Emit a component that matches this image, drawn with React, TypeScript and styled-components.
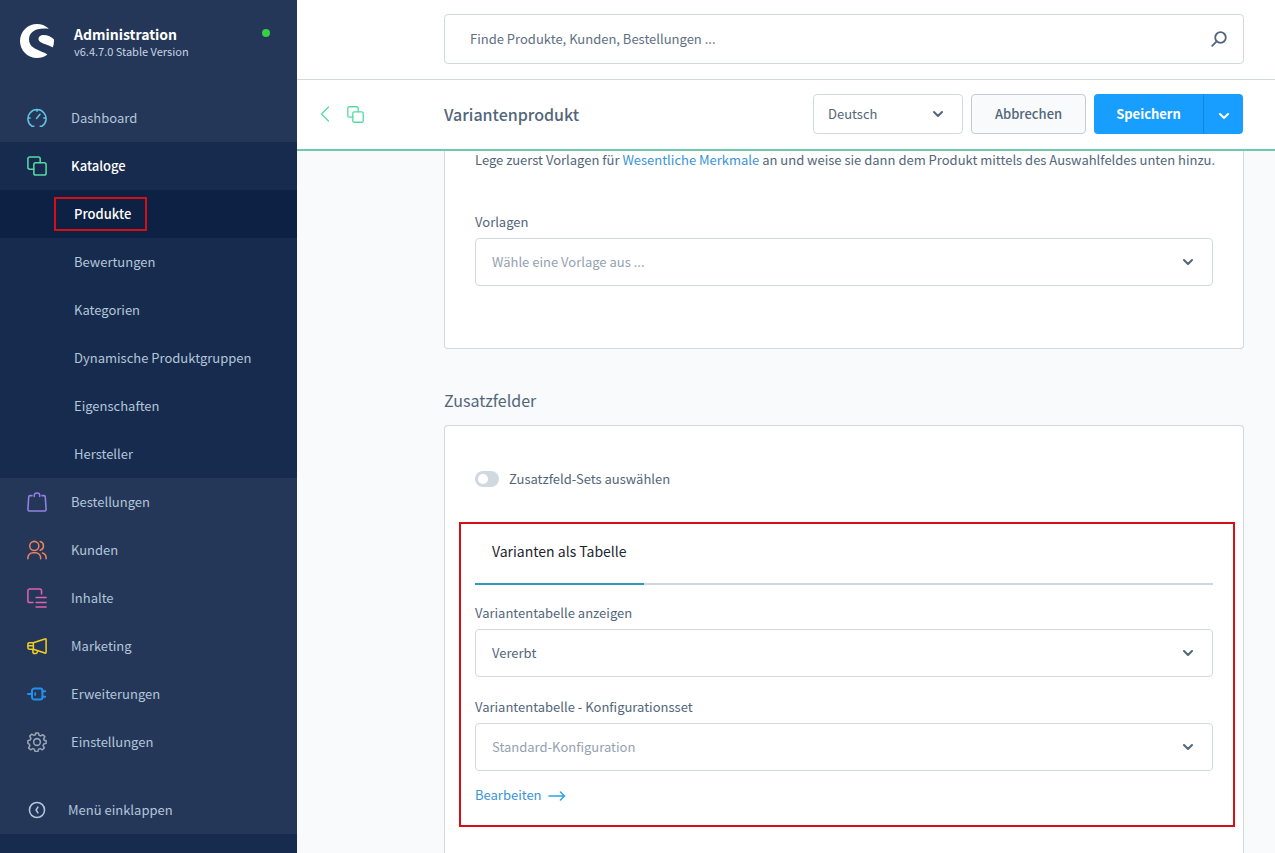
import React from 'react';
import styled, { createGlobalStyle, css } from 'styled-components';
import { SiShopware } from 'react-icons/si';

const GlobalStyle = createGlobalStyle`
  *, *::before, *::after { box-sizing: border-box; }
  body {
    margin: 0;
    background: #f9fafb;
    color: #52667a;
    font: 400 13px/20px "Noto Sans CJK SC", "Noto Sans", sans-serif;
  }
  button, input, select { font: inherit; color: inherit; }
  a { color: #3a94d8; text-decoration: none; }
`;

const Shell = styled.div`
  display: flex;
  min-height: 100vh;
`;

const Sidebar = styled.aside`
  display: flex;
  flex: 0 0 297px;
  flex-direction: column;
  background: #243758;
  color: #b3c6da;
`;

const Brand = styled.header`
  display: flex;
  align-items: flex-start;
  height: 94px;
  padding: 24px 27px 0 20px;
`;

const BrandText = styled.div`
  flex: 1;
  padding-left: 20px;
`;

const BrandName = styled.h1`
  margin: 0;
  color: #fff;
  font-size: 14px;
  font-weight: 700;
  line-height: 20px;
`;

const BrandVersion = styled.p`
  margin: 0;
  color: #c9d3e2;
  font-size: 11px;
  line-height: 14px;
`;

const StatusDot = styled.span`
  width: 8px;
  height: 8px;
  margin-top: 5px;
  border-radius: 50%;
  background: #37d046;
`;

const Nav = styled.nav`
  flex: 1;
  padding-bottom: 20px;
`;

const NavList = styled.ul`
  margin: 0;
  padding: 0;
  list-style: none;
`;

const SubList = styled(NavList)`
  background: #172b4e;
`;

const NavLink = styled.a<{ $active?: boolean }>`
  display: flex;
  align-items: center;
  gap: 24px;
  height: 48px;
  padding-left: 27px;
  color: ${(p) => (p.$active ? '#fff' : '#b3c6da')};
  background: ${(p) => (p.$active ? '#172b4e' : 'transparent')};
  font-weight: ${(p) => (p.$active ? 500 : 400)};
`;

const SubLink = styled.a<{ $active?: boolean }>`
  display: flex;
  align-items: center;
  height: 48px;
  padding-left: ${(p) => (p.$active ? 54 : 74)}px;
  color: ${(p) => (p.$active ? '#fff' : '#b3c6da')};
  background: ${(p) => (p.$active ? '#0d2144' : 'transparent')};
  font-weight: ${(p) => (p.$active ? 500 : 400)};
`;

const Marked = styled.span`
  padding: 5px 14px 5px 18px;
  border: 2px solid #d60f14;
`;

const CollapseButton = styled.button`
  display: flex;
  align-items: center;
  gap: 21px;
  height: 48px;
  padding: 0 0 0 27px;
  border: 0;
  background: none;
  cursor: pointer;
`;

const UserBar = styled.footer`
  height: 19px;
  background: #172b4e;
`;

const Main = styled.main`
  display: flex;
  flex: 1;
  flex-direction: column;
  min-width: 0;
`;

const TopBar = styled.div`
  height: 80px;
  padding: 14px 31px 0 147px;
  border-bottom: 1px solid #d1d9e0;
  background: #fff;
`;

const SearchBox = styled.label`
  display: flex;
  align-items: center;
  height: 50px;
  padding: 0 16px 0 24px;
  border: 1px solid #d1d9e0;
  border-radius: 4px;
`;

const SearchInput = styled.input`
  flex: 1;
  min-width: 0;
  padding: 0 1px;
  border: 0;
  outline: 0;
  background: none;
  &::placeholder { color: #607082; opacity: 1; }
`;

const SmartBar = styled.header`
  display: flex;
  align-items: center;
  gap: 8px;
  height: 71px;
  padding: 0 32px 1px 0;
  border-bottom: 2px solid #6fc9a8;
  background: #fff;
`;

const SmartBarIcons = styled.div`
  display: flex;
  align-items: center;
  gap: 17px;
  flex: 0 0 139px;
  padding-left: 23px;
`;

const IconLink = styled.a`
  display: flex;
`;

const Title = styled.h2`
  flex: 1;
  margin: 0;
  font-size: 16px;
  font-weight: 500;
  line-height: 24px;
`;

const buttonBase = css`
  height: 40px;
  font-weight: 500;
  cursor: pointer;
`;

const CancelButton = styled.button`
  ${buttonBase}
  width: 115px;
  padding: 0;
  border: 1px solid #c3cbd6;
  border-radius: 4px;
  background: #f9fafb;
`;

const SplitButton = styled.div`
  display: flex;
  overflow: hidden;
  border-radius: 4px;
`;

const SaveButton = styled.button<{ $menu?: boolean }>`
  ${buttonBase}
  display: flex;
  align-items: center;
  justify-content: center;
  width: ${(p) => (p.$menu ? 40 : 109)}px;
  padding: ${(p) => (p.$menu ? '4px 0 0' : '0')};
  border: 0;
  border-left: ${(p) => (p.$menu ? '1px solid #0f85e0' : '0')};
  background: #189eff;
  color: #fff;
  font-weight: 700;
`;

const SelectWrap = styled.div<{ $compact?: boolean }>`
  display: grid;
  align-items: center;
  width: ${(p) => (p.$compact ? '150px' : '100%')};
  > * { grid-area: 1 / 1; }
  > svg {
    justify-self: end;
    margin-right: 20px;
    pointer-events: none;
  }
`;

const SelectControl = styled.select<{ $compact?: boolean; $muted?: boolean }>`
  appearance: none;
  width: 100%;
  height: ${(p) => (p.$compact ? 40 : 48)}px;
  padding: 0 ${(p) => (p.$compact ? 14 : 16)}px;
  border: 1px solid #d1d9e0;
  border-radius: 4px;
  background: #fff;
  color: ${(p) => (p.$muted ? '#94a1b2' : '#52667a')};
`;

const Content = styled.div`
  display: flex;
  flex: 1;
  flex-direction: column;
  padding: 0 31px 0 147px;
`;

const Card = styled.section<{ $cut: 'top' | 'bottom' }>`
  padding: 0 30px;
  border: 1px solid #d1d9e0;
  background: #fff;
  ${(p) =>
    p.$cut === 'top'
      ? css`
          padding-bottom: 62px;
          border-top: 0;
          border-radius: 0 0 4px 4px;
        `
      : css`
          flex: 1;
          padding-top: 43px;
          padding-bottom: 26px;
          border-bottom: 0;
          border-radius: 4px 4px 0 0;
        `}
`;

const Hint = styled.p`
  margin: 0 -16px 43px 0;
  line-height: 18px;
`;

const Field = styled.div`
  display: flex;
  flex-direction: column;
  gap: 6px;
  & + & { margin-top: 20px; }
`;

const FieldLabel = styled.label`
  line-height: 20px;
`;

const CardTitle = styled.h3`
  margin: 39px 0 13px;
  font-size: 16px;
  font-weight: 400;
  line-height: 24px;
`;

const SwitchRow = styled.label`
  display: flex;
  align-items: center;
  gap: 10px;
  height: 20px;
`;

const Switch = styled.input`
  appearance: none;
  display: flex;
  align-items: center;
  width: 24px;
  height: 16px;
  margin: 0;
  padding: 0 3px;
  border-radius: 8px;
  background: #d1d9e0;
  &::before {
    content: '';
    width: 10px;
    height: 10px;
    border-radius: 50%;
    background: #fff;
  }
  &:checked { justify-content: flex-end; background: #189eff; }
`;

const Highlight = styled.div`
  margin: 33px -22px 0 -16px;
  padding: 0 20px 20px 14px;
  border: 2px solid #d60f14;
`;

const Tabs = styled.div`
  display: flex;
  margin-bottom: 18px;
  box-shadow: inset 0 -2px #d1d5dc;
`;

const Tab = styled.button`
  height: 61px;
  padding: 0 17px 6px;
  border: 0;
  border-bottom: 2px solid #3596c4;
  background: none;
  color: #1c2530;
  font-size: 14px;
  cursor: pointer;
`;

const EditLink = styled.a`
  display: inline-flex;
  align-items: center;
  gap: 6px;
  margin-top: 14px;
  line-height: 20px;
`;

type IconProps = { color?: string; size?: number; children?: React.ReactNode };

const Line = ({ color = 'currentColor', size = 20, children }: IconProps) => (
  <svg width={size} height={size} viewBox="0 0 22 22" fill="none" stroke={color} strokeWidth="1.7" strokeLinecap="round" strokeLinejoin="round" aria-hidden="true">
    {children}
  </svg>
);

const DashboardIcon = () => (
  <Line color="#62c4e2">
    <path d="M7.500 20H5.400A10 10 0 1 1 16.600 20H14.500M11 1.500v2M1.500 11h2M18.500 11h2M10.500 11.500l3.800-4.500" />
  </Line>
);

const CopyIcon = ({ color, size }: IconProps) => (
  <Line color={color} size={size}>
    <path d="M7.500 14.500H3a2 2 0 0 1-2-2V3a2 2 0 0 1 2-2h9.500a2 2 0 0 1 2 2v4.500" />
    <rect x="7.500" y="7.500" width="13.500" height="13.500" rx="2" />
  </Line>
);

const BagIcon = () => (
  <Line color="#9182e4">
    <path d="M5.500 4H3.400a1.500 1.500 0 0 0-1.500 1.400L1 18.800A1.900 1.900 0 0 0 2.900 21h16.200a1.900 1.900 0 0 0 1.900-2.200l-.9-13.400A1.500 1.500 0 0 0 18.600 4h-2.100M8 5V3.600a2.600 2.600 0 0 1 2.600-2.600h.8A2.600 2.600 0 0 1 14 3.600V5" />
  </Line>
);

const CustomersIcon = () => (
  <Line color="#ea8162">
    <circle cx="8" cy="6.500" r="5" />
    <path d="M1 20.500v-1a5.500 5.500 0 0 1 5.500-5.500h3a5.500 5.500 0 0 1 5.500 5.500v1M14.500 1.700a5 5 0 0 1 0 9.600M17 14.300a5.500 5.500 0 0 1 4 5.200v1" />
  </Line>
);

const ContentIcon = () => (
  <Line color="#df60b0">
    <path d="M6.500 16H3a2 2 0 0 1-2-2V3a2 2 0 0 1 2-2h11a2 2 0 0 1 2 2v3.500M10 10.500h11M10 16h11M10 21h11" />
  </Line>
);

const MarketingIcon = () => (
  <Line color="#f0cf20">
    <path d="M7 7.500L19.600 3.200a1 1 0 0 1 1.400 1v13.600a1 1 0 0 1-1.400 1L7 14.500zM7 7.500H2.500A1.500 1.500 0 0 0 1 9v4a1.500 1.500 0 0 0 1.500 1.500H7M6.500 14.500v2.700a2 2 0 0 0 2 2h1.200a1.600 1.600 0 0 0 1.500-1.200l.4-1.700M1.500 10.800H6.500" />
  </Line>
);

const PlugIcon = () => (
  <Line color="#2391ea">
    <rect x="5.500" y="5" width="11.500" height="12" rx="2.500" strokeWidth="2.200" />
    <path d="M1 11h4M17 8h3M17 14h3M9 10v2" strokeWidth="2" />
  </Line>
);

const GearIcon = () => (
  <Line color="#98a5b6">
    <circle cx="11" cy="11" r="3.700" />
    <path d="M9.500 1h3l.8 2.600 1.700.7 2.500-1.300 2.100 2.100-1.300 2.500.7 1.700L21 9.500v3l-2.600.8-.7 1.700 1.300 2.500-2.100 2.100-2.500-1.300-1.700.7-.8 2.600h-3l-.8-2.600-1.700-.7-2.500 1.300-2.100-2.100 1.300-2.500-.7-1.700L1 12.500v-3l2.600-.8.7-1.700L3 4.500l2.100-2.100 2.500 1.300 1.700-.7z" />
  </Line>
);

const CollapseIcon = () => (
  <Line>
    <circle cx="11" cy="11" r="8.300" />
    <path d="M12 7.800l-2 3.200 2 3.200" />
  </Line>
);

const BackIcon = () => (
  <svg width="10" height="16" viewBox="0 0 10 16" fill="none" stroke="#57d9a3" strokeWidth="1.300" strokeLinecap="round" strokeLinejoin="round" aria-hidden="true">
    <path d="M8.500 1L1.500 8l7 7" />
  </svg>
);

const ChevronIcon = () => (
  <svg width="10" height="8" viewBox="0 0 10 8" fill="none" stroke="currentColor" strokeWidth="2" strokeLinecap="round" strokeLinejoin="round" aria-hidden="true">
    <path d="M1 2l4 4 4-4" />
  </svg>
);

const SearchIcon = () => (
  <svg width="16" height="16" viewBox="0 0 16 16" fill="none" stroke="#52667a" strokeWidth="1.800" strokeLinecap="round" aria-hidden="true">
    <circle cx="9.500" cy="6.500" r="5.300" />
    <path d="M5.600 10.400L1.200 14.800" />
  </svg>
);

const ArrowIcon = () => (
  <svg width="18" height="12" viewBox="0 0 18 12" fill="none" stroke="#30a2da" strokeWidth="1.500" strokeLinecap="round" strokeLinejoin="round" aria-hidden="true">
    <path d="M1 7h15.500M12.500 3l4 4-4 4" />
  </svg>
);

const catalogueItems = ['Produkte', 'Bewertungen', 'Kategorien', 'Dynamische Produktgruppen', 'Eigenschaften', 'Hersteller'];

const lowerItems = [
  { label: 'Bestellungen', Icon: BagIcon },
  { label: 'Kunden', Icon: CustomersIcon },
  { label: 'Inhalte', Icon: ContentIcon },
  { label: 'Marketing', Icon: MarketingIcon },
  { label: 'Erweiterungen', Icon: PlugIcon },
  { label: 'Einstellungen', Icon: GearIcon },
];

type SelectFieldProps = { id: string; label: string; value: string; muted?: boolean };

const SelectField = ({ id, label, value, muted }: SelectFieldProps) => (
  <Field>
    <FieldLabel htmlFor={id}>{label}</FieldLabel>
    <SelectWrap>
      <SelectControl id={id} $muted={muted}>
        <option>{value}</option>
      </SelectControl>
      <ChevronIcon />
    </SelectWrap>
  </Field>
);

export default function App() {
  return (
    <>
      <GlobalStyle />
      <Shell>
        <Sidebar>
          <Brand>
            <SiShopware size={34} color="#fff" aria-hidden="true" />
            <BrandText>
              <BrandName>Administration</BrandName>
              <BrandVersion>v6.4.7.0 Stable Version</BrandVersion>
            </BrandText>
            <StatusDot />
          </Brand>
          <Nav>
            <NavList>
              <li>
                <NavLink href="#dashboard"><DashboardIcon />Dashboard</NavLink>
              </li>
              <li>
                <NavLink href="#kataloge" $active><CopyIcon color="#57d9a3" />Kataloge</NavLink>
                <SubList>
                  {catalogueItems.map((label, i) => (
                    <li key={label}>
                      <SubLink href={`#${label}`} $active={i === 0}>
                        {i === 0 ? <Marked>{label}</Marked> : label}
                      </SubLink>
                    </li>
                  ))}
                </SubList>
              </li>
              {lowerItems.map(({ label, Icon }) => (
                <li key={label}>
                  <NavLink href={`#${label}`}><Icon />{label}</NavLink>
                </li>
              ))}
            </NavList>
          </Nav>
          <CollapseButton type="button"><CollapseIcon />Menü einklappen</CollapseButton>
          <UserBar />
        </Sidebar>

        <Main>
          <TopBar>
            <SearchBox>
              <SearchInput type="text" placeholder="Finde Produkte, Kunden, Bestellungen ..." aria-label="Suche" />
              <SearchIcon />
            </SearchBox>
          </TopBar>
          <SmartBar>
            <SmartBarIcons>
              <IconLink href="#zurueck" aria-label="Zurück"><BackIcon /></IconLink>
              <IconLink href="#kataloge" aria-label="Kataloge"><CopyIcon color="#57d9a3" size={17} /></IconLink>
            </SmartBarIcons>
            <Title>Variantenprodukt</Title>
            <SelectWrap $compact>
              <SelectControl $compact aria-label="Sprache">
                <option>Deutsch</option>
              </SelectControl>
              <ChevronIcon />
            </SelectWrap>
            <CancelButton type="button">Abbrechen</CancelButton>
            <SplitButton>
              <SaveButton type="button">Speichern</SaveButton>
              <SaveButton type="button" $menu aria-label="Weitere Aktionen"><ChevronIcon /></SaveButton>
            </SplitButton>
          </SmartBar>

          <Content>
            <Card $cut="top">
              <Hint>
                Lege zuerst Vorlagen für <a href="#merkmale">Wesentliche Merkmale</a> an und weise sie dann dem Produkt mittels des Auswahlfeldes unten hinzu.
              </Hint>
              <SelectField id="vorlagen" label="Vorlagen" value="Wähle eine Vorlage aus ..." muted />
            </Card>

            <CardTitle>Zusatzfelder</CardTitle>
            <Card $cut="bottom">
              <SwitchRow>
                <Switch type="checkbox" role="switch" />
                Zusatzfeld-Sets auswählen
              </SwitchRow>
              <Highlight>
                <Tabs role="tablist">
                  <Tab type="button" role="tab" aria-selected="true">Varianten als Tabelle</Tab>
                </Tabs>
                <SelectField id="tabelle" label="Variantentabelle anzeigen" value="Vererbt" />
                <SelectField id="konfiguration" label="Variantentabelle - Konfigurationsset" value="Standard-Konfiguration" muted />
                <EditLink href="#bearbeiten">Bearbeiten <ArrowIcon /></EditLink>
              </Highlight>
            </Card>
          </Content>
        </Main>
      </Shell>
    </>
  );
}
